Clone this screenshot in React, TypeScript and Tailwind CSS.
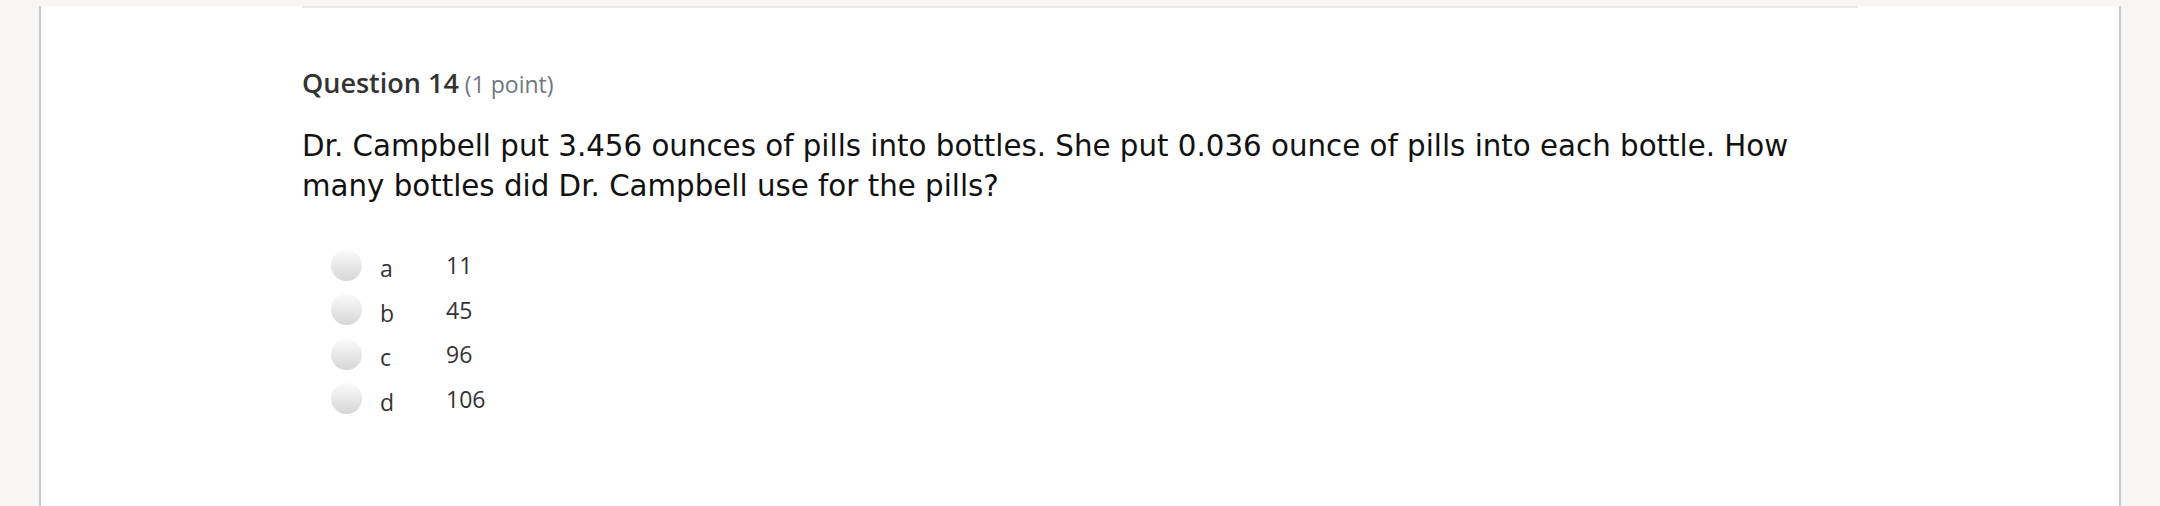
const options = [
  { key: "a", value: "11" },
  { key: "b", value: "45" },
  { key: "c", value: "96" },
  { key: "d", value: "106" },
];

function Radio() {
  return (
    <span className="block h-[31px] w-[31px] shrink-0 rounded-full bg-gradient-to-b from-[#fbfbfb] to-[#d6d6d6]" />
  );
}

export default function App() {
  return (
    <div className="h-[506px] overflow-hidden bg-[#f7f6f4] px-[39px]">
      <div className="h-full border-x-2 border-[#c9c9c9] bg-white">
        <div className="mx-auto w-[1556px]">
          {/* divider from previous question */}
          <div className="mt-[6px] h-[2px] bg-[#e8e8e8]" />

          <h2 className="mt-[57px] font-['Open_Sans',sans-serif] text-[27px] leading-[36px] font-semibold text-[#333]">
            Question 14
            <span className="ml-[6px] text-[23px] font-normal text-[#6f7780]">
              (1 point)
            </span>
          </h2>

          <p className="mt-[24px] font-['DejaVu_Sans',sans-serif] text-[29.3px] leading-[40px] text-[#111]">
            Dr. Campbell put 3.456 ounces of pills into bottles. She put 0.036
            ounce of pills into each bottle. How many bottles did Dr. Campbell
            use for the pills?
          </p>

          <div className="mt-[37px] flex flex-col pl-[29px] font-['Open_Sans',sans-serif] text-[23px] text-[#333]">
            {options.map((o) => (
              <label key={o.key} className="flex h-[44.5px] items-center">
                <Radio />
                <span className="ml-[18px] w-[66px] pt-[6px]">{o.key}</span>
                <span>{o.value}</span>
              </label>
            ))}
          </div>
        </div>
      </div>
    </div>
  );
}
